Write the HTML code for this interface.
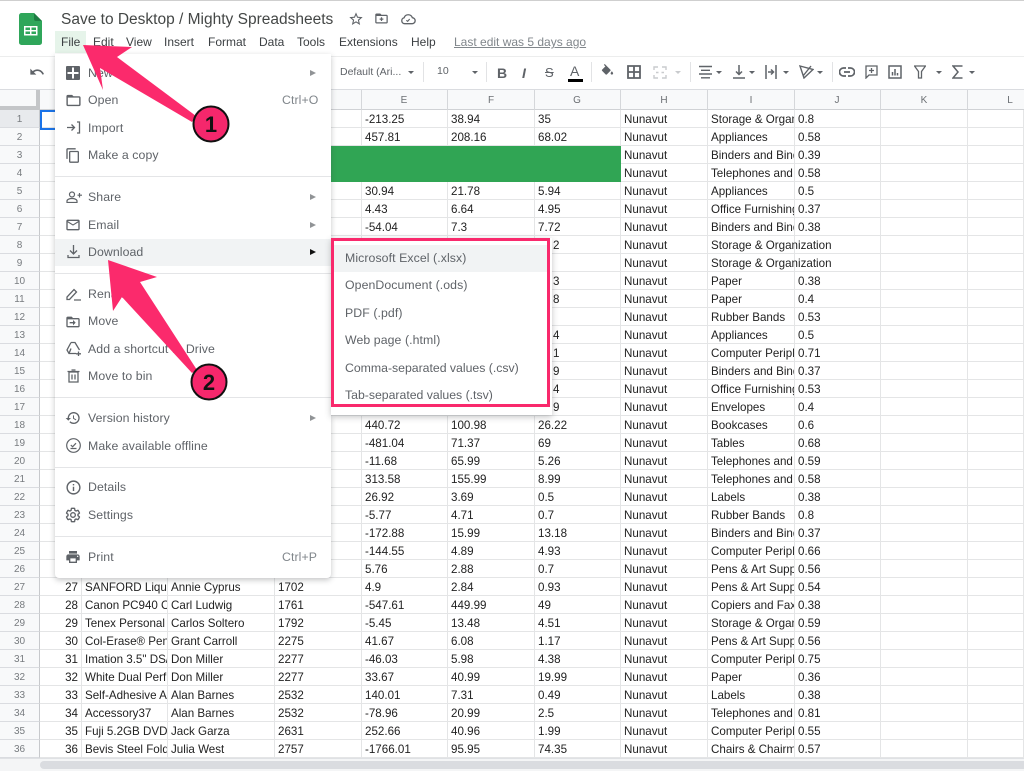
<!DOCTYPE html>
<html><head><meta charset="utf-8"><title>Save to Desktop</title>
<style>
html,body{margin:0;padding:0;background:#fff;width:1024px;height:771px;overflow:hidden}
#p{position:relative;width:1024px;height:771px;overflow:hidden;font-family:"Liberation Sans",sans-serif;filter:blur(.3px)}
.a{position:absolute;white-space:nowrap}
.m{position:absolute;white-space:nowrap;font-size:12px;color:#3c4043;top:35px;line-height:14px}
.t{position:absolute;white-space:nowrap;font-size:12.3px;letter-spacing:.08px;color:#5f6368;line-height:16px}
.s{position:absolute;left:55px;width:276px;height:1px;background:#e4e5e7}
.v{position:absolute;width:1px;height:20px;top:62px;background:#e2e3e5}
.c{position:absolute;top:94px;font-size:10px;color:#6b6f73;width:40px;text-align:center;line-height:14px}
svg.i{position:absolute;fill:#5f6368}
.tri{position:absolute;width:0;height:0;border-left:6px solid #909396;border-top:3.5px solid transparent;border-bottom:3.5px solid transparent}
.dn{position:absolute;width:0;height:0;border-top:3.5px solid #5f6368;border-left:3.5px solid transparent;border-right:3.5px solid transparent}
table{position:absolute;left:0;top:110px;border-collapse:separate;border-spacing:0;table-layout:fixed;width:1024px;font-size:11.6px;color:#222}
td,th{box-sizing:border-box;height:18px;padding:2px 3px 0;border-right:1px solid #e4e5e6;border-bottom:1px solid #e4e5e6;overflow:hidden;white-space:nowrap;font-weight:normal;text-align:left;line-height:15px}
th{background:#f8f9fa;color:#777b7f;font-size:10px;text-align:center;border-right:1px solid #c7c9cc;border-bottom:1px solid #dadce0}
.r{text-align:right}
.o{overflow:visible;position:relative}
td.d{padding-left:18px}
</style></head><body><div id="p">

<div class="a" style="left:0;top:0;width:1024px;height:1px;background:#cfcfcf"></div>

<!-- Sheets logo -->
<svg class="a" style="left:19px;top:13px" width="24" height="32" viewBox="0 0 24 32"><path d="M2.5 0H15l8 8v21.500a2.500 2.500 0 0 1-2.500 2.500H2.500A2.500 2.500 0 0 1 0 29.500V2.500A2.500 2.500 0 0 1 2.500 0z" fill="#2fa65a"/><path d="M15 0l8 8h-6a2 2 0 0 1-2-2z" fill="#1e7d44"/><path d="M5 13h13.500v9.500H5zM6.500 14.500V17H11v-2.500zM12.500 14.500V17H17v-2.500zM6.500 18.500V21H11v-2.500zM12.500 18.500V21H17v-2.500z" fill="#fff" fill-rule="evenodd"/></svg>

<div class="a" style="left:61px;top:11px;font-size:15.5px;line-height:18px;color:#444746">Save to Desktop / Mighty Spreadsheets</div>

<svg class="i" style="left:348px;top:11px" width="16" height="16" viewBox="0 0 24 24"><path d="M22 9.240l-7.190-.62L12 2 9.190 8.630 2 9.240l5.460 4.730L5.820 21 12 17.270 18.180 21l-1.630-7.030L22 9.240zM12 15.400l-3.760 2.270 1-4.280-3.320-2.880 4.380-.38L12 6.100l1.710 4.040 4.380.38-3.320 2.880 1 4.280L12 15.400z"/></svg>
<svg class="i" style="left:374px;top:11px" width="15" height="15" viewBox="0 0 24 24"><path d="M20 6h-8l-2-2H4c-1.100 0-2 .9-2 2v12c0 1.100.9 2 2 2h16c1.100 0 2-.9 2-2V8c0-1.100-.9-2-2-2zm0 12H4V8h16v10z"/><path d="M11 10h2v2h2v2h-2v2h-2v-2H9v-2h2z"/></svg>
<svg class="a" style="left:400px;top:11px" width="16" height="16" viewBox="0 0 24 24" fill="none" stroke="#5f6368" stroke-width="2"><path d="M7 19a4.500 4.500 0 0 1-.8-8.900A6.500 6.500 0 0 1 18.500 10a4.500 4.500 0 0 1-.5 9z"/><path d="M9.500 14l2 1.500 3-3.500" stroke-width="1.700"/></svg>

<!-- Menu bar -->
<div class="a" style="left:55px;top:31px;width:31px;height:22px;background:#e6f4ea"></div>
<div class="m" style="left:61px">File</div>
<div class="m" style="left:93px">Edit</div>
<div class="m" style="left:126px">View</div>
<div class="m" style="left:164px">Insert</div>
<div class="m" style="left:208px">Format</div>
<div class="m" style="left:259px">Data</div>
<div class="m" style="left:297px">Tools</div>
<div class="m" style="left:339px">Extensions</div>
<div class="m" style="left:411px">Help</div>
<div class="m" style="left:454px;color:#80868b;text-decoration:underline">Last edit was 5 days ago</div>

<!-- Toolbar -->
<div class="a" style="left:0;top:56px;width:1024px;height:1px;background:#eceded"></div>
<div class="a" style="left:0;top:89px;width:1024px;height:1px;background:#dadce0"></div>
<svg class="i" style="left:29px;top:64px" width="16" height="16" viewBox="0 0 24 24"><path d="M12.500 8c-2.650 0-5.050.99-6.900 2.600L2 7v9h9l-3.620-3.620c1.390-1.160 3.160-1.880 5.120-1.880 3.540 0 6.550 2.310 7.600 5.500l2.370-.78C21.080 11.030 17.150 8 12.500 8z"/></svg>
<div class="a" style="left:340px;top:66px;font-size:10.500px;color:#5f6368;line-height:13px">Default (Ari...</div>
<div class="dn" style="left:408px;top:71px"></div>
<div class="v" style="left:423px"></div>
<div class="a" style="left:437px;top:65px;font-size:10.500px;color:#5f6368;line-height:13px">10</div>
<div class="dn" style="left:472px;top:71px"></div>
<div class="v" style="left:486px"></div>
<div class="a" style="left:497px;top:65px;font-size:14px;font-weight:bold;color:#5f6368;line-height:16px">B</div>
<div class="a" style="left:522px;top:65px;font-size:14px;font-weight:bold;font-style:italic;color:#5f6368;line-height:16px">I</div>
<div class="a" style="left:545px;top:65px;font-size:13px;color:#5f6368;line-height:16px;text-decoration:line-through">S</div>
<div class="a" style="left:570px;top:63px;font-size:14px;color:#5f6368;line-height:16px">A</div>
<div class="a" style="left:568px;top:79px;width:15px;height:3px;background:#000"></div>
<div class="v" style="left:591px"></div>
<svg class="i" style="left:600px;top:64px" width="15" height="15" viewBox="0 0 24 24"><path d="M16.560 8.940 7.620 0 6.210 1.410l2.380 2.380-5.150 5.150c-.59.590-.59 1.540 0 2.120l5.500 5.500c.29.290.68.440 1.060.44s.77-.15 1.060-.44l5.500-5.500c.59-.58.59-1.530 0-2.120z"/><path d="M19 11.500s-2 2.170-2 3.500c0 1.100.9 2 2 2s2-.9 2-2c0-1.330-2-3.500-2-3.500z"/></svg>
<svg class="a" style="left:627px;top:65px" width="14" height="14" viewBox="0 0 14 14" fill="none" stroke="#5f6368" stroke-width="1.800"><path d="M1 1h12v12H1zM7 1v12M1 7h12"/></svg>
<svg class="a" style="left:653px;top:66px" width="14" height="13" viewBox="0 0 14 13" fill="none" stroke="#c9cbce" stroke-width="1.400"><path d="M1 4V1h4M9 1h4v3M13 9v3H9M5 12H1V9M3 6.500h2.500M8.500 6.500H11"/></svg>
<div class="dn" style="left:675px;top:71px;border-top-color:#c9cbce"></div>
<div class="v" style="left:690px"></div>
<svg class="a" style="left:699px;top:65px" width="13" height="14" viewBox="0 0 13 14" fill="none" stroke="#5f6368" stroke-width="1.400"><path d="M0 1.500h13M2 5.300h9M0 9h13M2 12.800h9"/></svg>
<div class="dn" style="left:716px;top:71px"></div>
<svg class="a" style="left:733px;top:65px" width="12" height="14" viewBox="0 0 12 14" fill="none" stroke="#5f6368" stroke-width="1.500"><path d="M0 13h12M6 0v9M3 6.500l3 3 3-3"/></svg>
<div class="dn" style="left:749px;top:71px"></div>
<svg class="a" style="left:765px;top:65px" width="12" height="14" viewBox="0 0 12 14" fill="none" stroke="#5f6368" stroke-width="1.500"><path d="M1 0v14M11 0v14M3 7h5M6 4.500l2.500 2.500L6 9.500"/></svg>
<div class="dn" style="left:783px;top:71px"></div>
<svg class="a" style="left:799px;top:65px" width="15" height="14" viewBox="0 0 15 14" fill="none" stroke="#5f6368" stroke-width="1.400"><path d="M1 1l13 3.500L5 13zM12 1 4 11"/></svg>
<div class="dn" style="left:817px;top:71px"></div>
<div class="v" style="left:832px"></div>
<svg class="a" style="left:839px;top:67px" width="16" height="10" viewBox="0 0 16 10" fill="none" stroke="#5f6368" stroke-width="1.700"><path d="M7 1H4.500a4 4 0 0 0 0 8H7M9 1h2.500a4 4 0 0 1 0 8H9M5 5h6"/></svg>
<svg class="a" style="left:865px;top:65px" width="13" height="14" viewBox="0 0 13 14" fill="none" stroke="#5f6368" stroke-width="1.300"><path d="M1 1h11v9H4l-3 3zM6.500 3v5M4 5.500h5"/></svg>
<svg class="a" style="left:888px;top:65px" width="14" height="14" viewBox="0 0 14 14" fill="none" stroke="#5f6368" stroke-width="1.500"><path d="M1 1h12v12H1zM4.500 10.500V7M7 10.500V4M9.500 10.500V8"/></svg>
<svg class="a" style="left:914px;top:65px" width="12" height="14" viewBox="0 0 12 14" fill="none" stroke="#5f6368" stroke-width="1.300"><path d="M.5 1h11L7.500 6.500V13h-3V6.500z"/></svg>
<div class="dn" style="left:936px;top:71px"></div>
<svg class="a" style="left:952px;top:65px" width="11" height="14" viewBox="0 0 11 14" fill="none" stroke="#5f6368" stroke-width="1.500"><path d="M10.500 1H1l5 6-5 6h9.500"/></svg>
<div class="dn" style="left:969px;top:71px"></div>

<!-- Column headers -->
<div class="a" style="left:0;top:90px;width:1024px;height:20px;background:#f8f9fa"></div>
<div class="a" style="left:0;top:106px;width:40px;height:4px;background:#c4c6c8"></div>
<div class="a" style="left:36px;top:90px;width:4px;height:20px;background:#c4c6c8"></div>
<div class="a" style="left:40px;top:109px;width:984px;height:1px;background:#d0d2d5"></div>
<div class="a" style="left:361px;top:90px;width:1px;height:20px;background:#d5d7da"></div>
<div class="a" style="left:447px;top:90px;width:1px;height:20px;background:#d5d7da"></div>
<div class="a" style="left:534px;top:90px;width:1px;height:20px;background:#d5d7da"></div>
<div class="a" style="left:620px;top:90px;width:1px;height:20px;background:#d5d7da"></div>
<div class="a" style="left:707px;top:90px;width:1px;height:20px;background:#d5d7da"></div>
<div class="a" style="left:794px;top:90px;width:1px;height:20px;background:#d5d7da"></div>
<div class="a" style="left:880px;top:90px;width:1px;height:20px;background:#d5d7da"></div>
<div class="a" style="left:967px;top:90px;width:1px;height:20px;background:#d5d7da"></div>
<div class="c" style="left:384px">E</div>
<div class="c" style="left:471px">F</div>
<div class="c" style="left:557px">G</div>
<div class="c" style="left:644px">H</div>
<div class="c" style="left:731px">I</div>
<div class="c" style="left:817px">J</div>
<div class="c" style="left:904px">K</div>
<div class="c" style="left:990px">L</div>

<!-- Grid -->
<table>
<colgroup><col style="width:40px"><col style="width:42px"><col style="width:86px"><col style="width:107px"><col style="width:87px"><col style="width:86px"><col style="width:87px"><col style="width:86px"><col style="width:87px"><col style="width:87px"><col style="width:86px"><col style="width:87px"><col style="width:56px"></colgroup>
<tr><th style="background:#e8eaed">1<td><td><td><td><td>-213.25<td>38.94<td>35<td>Nunavut<td>Storage &amp; Organization<td>0.8<td><td>
<tr><th>2<td><td><td><td><td>457.81<td>208.16<td>68.02<td>Nunavut<td>Appliances<td>0.58<td><td>
<tr><th>3<td><td><td><td><td><td><td><td>Nunavut<td>Binders and Binder<td>0.39<td><td>
<tr><th>4<td><td><td><td><td><td><td><td>Nunavut<td>Telephones and Comm<td>0.58<td><td>
<tr><th>5<td><td><td><td><td>30.94<td>21.78<td>5.94<td>Nunavut<td>Appliances<td>0.5<td><td>
<tr><th>6<td><td><td><td><td>4.43<td>6.64<td>4.95<td>Nunavut<td>Office Furnishings<td>0.37<td><td>
<tr><th>7<td><td><td><td><td>-54.04<td>7.3<td>7.72<td>Nunavut<td>Binders and Binder<td>0.38<td><td>
<tr><th>8<td><td><td><td><td><td><td class="d">2<td>Nunavut<td class="o">Storage &amp; Organization<td><td><td>
<tr><th>9<td><td><td><td><td><td><td><td>Nunavut<td class="o">Storage &amp; Organization<td><td><td>
<tr><th>10<td><td><td><td><td><td><td class="d">3<td>Nunavut<td>Paper<td>0.38<td><td>
<tr><th>11<td><td><td><td><td><td><td class="d">8<td>Nunavut<td>Paper<td>0.4<td><td>
<tr><th>12<td><td><td><td><td><td><td><td>Nunavut<td>Rubber Bands<td>0.53<td><td>
<tr><th>13<td><td><td><td><td><td><td class="d">4<td>Nunavut<td>Appliances<td>0.5<td><td>
<tr><th>14<td><td><td><td><td><td><td class="d">1<td>Nunavut<td>Computer Peripherals<td>0.71<td><td>
<tr><th>15<td><td><td><td><td><td><td class="d">9<td>Nunavut<td>Binders and Binder<td>0.37<td><td>
<tr><th>16<td><td><td><td><td><td><td class="d">4<td>Nunavut<td>Office Furnishings<td>0.53<td><td>
<tr><th>17<td><td><td><td><td><td><td class="d">9<td>Nunavut<td>Envelopes<td>0.4<td><td>
<tr><th>18<td><td><td><td><td>440.72<td>100.98<td>26.22<td>Nunavut<td>Bookcases<td>0.6<td><td>
<tr><th>19<td><td><td><td><td>-481.04<td>71.37<td>69<td>Nunavut<td>Tables<td>0.68<td><td>
<tr><th>20<td><td><td><td><td>-11.68<td>65.99<td>5.26<td>Nunavut<td>Telephones and Comm<td>0.59<td><td>
<tr><th>21<td><td><td><td><td>313.58<td>155.99<td>8.99<td>Nunavut<td>Telephones and Comm<td>0.58<td><td>
<tr><th>22<td><td><td><td><td>26.92<td>3.69<td>0.5<td>Nunavut<td>Labels<td>0.38<td><td>
<tr><th>23<td><td><td><td><td>-5.77<td>4.71<td>0.7<td>Nunavut<td>Rubber Bands<td>0.8<td><td>
<tr><th>24<td><td><td><td><td>-172.88<td>15.99<td>13.18<td>Nunavut<td>Binders and Binder<td>0.37<td><td>
<tr><th>25<td><td><td><td><td>-144.55<td>4.89<td>4.93<td>Nunavut<td>Computer Peripherals<td>0.66<td><td>
<tr><th>26<td><td><td><td><td>5.76<td>2.88<td>0.7<td>Nunavut<td>Pens &amp; Art Supplies<td>0.56<td><td>
<tr><th>27<td class="r">27<td>SANFORD Liquid Accent<td>Annie Cyprus<td>1702<td>4.9<td>2.84<td>0.93<td>Nunavut<td>Pens &amp; Art Supplies<td>0.54<td><td>
<tr><th>28<td class="r">28<td>Canon PC940 Copier<td>Carl Ludwig<td>1761<td>-547.61<td>449.99<td>49<td>Nunavut<td>Copiers and Fax<td>0.38<td><td>
<tr><th>29<td class="r">29<td>Tenex Personal Filing<td>Carlos Soltero<td>1792<td>-5.45<td>13.48<td>4.51<td>Nunavut<td>Storage &amp; Organization<td>0.59<td><td>
<tr><th>30<td class="r">30<td>Col-Erase® Pencils<td>Grant Carroll<td>2275<td>41.67<td>6.08<td>1.17<td>Nunavut<td>Pens &amp; Art Supplies<td>0.56<td><td>
<tr><th>31<td class="r">31<td>Imation 3.5" DS/HD<td>Don Miller<td>2277<td>-46.03<td>5.98<td>4.38<td>Nunavut<td>Computer Peripherals<td>0.75<td><td>
<tr><th>32<td class="r">32<td>White Dual Perf Computer<td>Don Miller<td>2277<td>33.67<td>40.99<td>19.99<td>Nunavut<td>Paper<td>0.36<td><td>
<tr><th>33<td class="r">33<td>Self-Adhesive Address<td>Alan Barnes<td>2532<td>140.01<td>7.31<td>0.49<td>Nunavut<td>Labels<td>0.38<td><td>
<tr><th>34<td class="r">34<td>Accessory37<td>Alan Barnes<td>2532<td>-78.96<td>20.99<td>2.5<td>Nunavut<td>Telephones and Comm<td>0.81<td><td>
<tr><th>35<td class="r">35<td>Fuji 5.2GB DVD-RAM<td>Jack Garza<td>2631<td>252.66<td>40.96<td>1.99<td>Nunavut<td>Computer Peripherals<td>0.55<td><td>
<tr><th>36<td class="r">36<td>Bevis Steel Folding<td>Julia West<td>2757<td>-1766.01<td>95.95<td>74.35<td>Nunavut<td>Chairs &amp; Chairmats<td>0.57<td><td>
</table>

<div class="a" style="left:275px;top:146px;width:346px;height:36px;background:#30a554"></div>
<div class="a" style="left:40px;top:110px;width:14px;height:16px;border:2px solid #1a73e8"></div>

<!-- Bottom scrollbar -->
<div class="a" style="left:0;top:758px;width:1024px;height:13px;background:#f4f5f6;border-top:1px solid #dfe1e4;box-sizing:border-box"></div>
<div class="a" style="left:40px;top:761px;width:984px;height:8px;background:#dadce0;border-radius:4px 0 0 4px"></div>

<!-- File menu -->
<div class="a" style="left:55px;top:54px;width:276px;height:524px;background:#fff;border-radius:0 0 4px 4px;box-shadow:0 2px 6px rgba(60,64,67,.3)"></div>
<div class="a" style="left:55px;top:239px;width:276px;height:27px;background:#f1f3f4"></div>
<div class="s" style="top:176px"></div>
<div class="s" style="top:273px"></div>
<div class="s" style="top:397px"></div>
<div class="s" style="top:467px"></div>
<div class="s" style="top:536px"></div>

<div class="t" style="left:88px;top:65px">New</div>
<div class="t" style="left:88px;top:92px">Open</div>
<div class="t" style="left:88px;top:120px">Import</div>
<div class="t" style="left:88px;top:147px">Make a copy</div>
<div class="t" style="left:88px;top:189px">Share</div>
<div class="t" style="left:88px;top:217px">Email</div>
<div class="t" style="left:88px;top:244px">Download</div>
<div class="t" style="left:88px;top:286px">Rename</div>
<div class="t" style="left:88px;top:313px">Move</div>
<div class="t" style="left:88px;top:341px">Add a shortcut to Drive</div>
<div class="t" style="left:88px;top:368px">Move to bin</div>
<div class="t" style="left:88px;top:410px">Version history</div>
<div class="t" style="left:88px;top:438px">Make available offline</div>
<div class="t" style="left:88px;top:479px">Details</div>
<div class="t" style="left:88px;top:507px">Settings</div>
<div class="t" style="left:88px;top:549px">Print</div>
<div class="t" style="left:282px;top:92px;color:#80868b">Ctrl+O</div>
<div class="t" style="left:282px;top:549px;color:#80868b">Ctrl+P</div>

<div class="tri" style="left:310px;top:70px"></div>
<div class="tri" style="left:310px;top:194px"></div>
<div class="tri" style="left:310px;top:222px"></div>
<div class="tri" style="left:310px;top:249px;border-left-color:#111"></div>
<div class="tri" style="left:310px;top:415px"></div>

<!-- Menu icons -->
<svg class="a" style="left:66px;top:66px" width="14" height="14" viewBox="0 0 14 14"><rect width="14" height="14" rx="1" fill="#5f6368"/><path d="M6 1.500h2V6h4.500v2H8v4.500H6V8H1.500V6H6z" fill="#fff"/></svg>
<svg class="i" style="left:65px;top:92px" width="17" height="17" viewBox="0 0 24 24"><path d="M20 6h-8l-2-2H4c-1.100 0-2 .9-2 2v12c0 1.100.9 2 2 2h16c1.100 0 2-.9 2-2V8c0-1.100-.9-2-2-2zm0 12H4V8h16v10z"/></svg>
<svg class="a" style="left:67px;top:121px" width="14" height="13" viewBox="0 0 14 13" fill="none" stroke="#5f6368" stroke-width="1.300"><path d="M0 6.500h7M4.500 3.500l3 3-3 3M10 1h2.500v11H10"/></svg>
<svg class="i" style="left:65px;top:147px" width="16" height="17" viewBox="0 0 24 24"><path d="M16 1H4c-1.100 0-2 .9-2 2v14h2V3h12V1zm3 4H8c-1.100 0-2 .9-2 2v14c0 1.100.9 2 2 2h11c1.100 0 2-.9 2-2V7c0-1.100-.9-2-2-2zm0 16H8V7h11v14z"/></svg>
<svg class="a" style="left:66px;top:191px" width="16" height="12" viewBox="0 0 16 12" fill="none" stroke="#5f6368" stroke-width="1.200"><circle cx="6" cy="3.500" r="2.500"/><path d="M1 11.500V10c0-1.500 2.500-2.500 5-2.500s5 1 5 2.500v1.500zM13.500 2v4.500M11.500 4.200h4.500"/></svg>
<svg class="i" style="left:65px;top:217px" width="16" height="16" viewBox="0 0 24 24"><path d="M20 4H4c-1.100 0-2 .9-2 2v12c0 1.100.9 2 2 2h16c1.100 0 2-.9 2-2V6c0-1.100-.9-2-2-2zm0 14H4V8l8 5 8-5v10zm-8-7L4 6h16l-8 5z"/></svg>
<svg class="a" style="left:67px;top:245px" width="13" height="14" viewBox="0 0 13 14" fill="none" stroke="#5f6368" stroke-width="1.300"><path d="M6.500 0v8.500M3 5.500l3.500 3.500L10 5.500M1 10v2.500h11V10"/></svg>
<svg class="a" style="left:66px;top:287px" width="15" height="14" viewBox="0 0 15 14" fill="none" stroke="#5f6368" stroke-width="1.300"><path d="M1 12.500V10L8 2.500l2.500 2.500L3.500 12.500zM8 13h7"/></svg>
<svg class="i" style="left:65px;top:314px" width="16" height="16" viewBox="0 0 24 24"><path d="M20 6h-8l-2-2H4c-1.100 0-2 .9-2 2v12c0 1.100.9 2 2 2h16c1.100 0 2-.9 2-2V8c0-1.100-.9-2-2-2zm0 12H4V8h16v10z"/><path d="M12 9l4 4-4 4v-3H7v-2h5z"/></svg>
<svg class="a" style="left:66px;top:341px" width="16" height="16" viewBox="0 0 16 16" fill="none" stroke="#5f6368" stroke-width="1.300"><path d="M5 1.500h4L13.500 9M5 1.500L1 9l2 3.500h7M5 7.500l-2 5M12.500 10.500v4.500M10 12.800h5"/></svg>
<svg class="a" style="left:67px;top:369px" width="13" height="14" viewBox="0 0 13 14" fill="none" stroke="#5f6368" stroke-width="1.300"><path d="M2 3h9v10H2zM0.500 2.500h12M4.500 1h4M5 5.500v5M8 5.500v5"/></svg>
<svg class="i" style="left:65px;top:410px" width="16" height="16" viewBox="0 0 24 24"><path d="M13 3a9 9 0 0 0-9 9H1l3.890 3.890.07.14L9 12H6c0-3.870 3.130-7 7-7s7 3.130 7 7-3.130 7-7 7c-1.930 0-3.680-.79-4.940-2.060l-1.420 1.420A8.954 8.954 0 0 0 13 21a9 9 0 0 0 0-18zm-1 5v5l4.280 2.540.72-1.210-3.500-2.080V8H12z"/></svg>
<svg class="a" style="left:66px;top:438px" width="15" height="15" viewBox="0 0 15 15" fill="none" stroke="#5f6368" stroke-width="1.200"><circle cx="7.500" cy="7.500" r="6.800"/><path d="M4.500 10.500h6M4.800 7l1.800 1.800 3.400-3.600"/></svg>
<svg class="i" style="left:65px;top:479px" width="17" height="17" viewBox="0 0 24 24"><path d="M11 7h2v2h-2zm0 4h2v6h-2zm1-9C6.480 2 2 6.480 2 12s4.480 10 10 10 10-4.480 10-10S17.520 2 12 2zm0 18c-4.410 0-8-3.590-8-8s3.590-8 8-8 8 3.590 8 8-3.590 8-8 8z"/></svg>
<svg class="a" style="left:65px;top:507px" width="16" height="16" viewBox="0 0 24 24" fill="none" stroke="#5f6368" stroke-width="2"><path d="M19.430 12.980c.04-.32.07-.64.07-.98s-.03-.66-.07-.98l2.110-1.650c.19-.15.24-.42.12-.64l-2-3.460c-.12-.22-.39-.3-.61-.22l-2.490 1c-.52-.4-1.080-.73-1.690-.98l-.38-2.650C14.460 2.180 14.250 2 14 2h-4c-.25 0-.46.18-.49.42l-.38 2.650c-.61.25-1.170.59-1.690.98l-2.490-1c-.23-.09-.49 0-.61.22l-2 3.460c-.13.22-.07.49.12.64l2.110 1.650c-.04.32-.07.65-.07.98s.03.66.07.98l-2.110 1.650c-.19.15-.24.42-.12.64l2 3.460c.12.22.39.3.61.22l2.490-1c.52.4 1.080.73 1.690.98l.38 2.650c.03.24.24.42.49.42h4c.25 0 .46-.18.49-.42l.38-2.650c.61-.25 1.170-.59 1.690-.98l2.490 1c.23.09.49 0 .61-.22l2-3.460c.12-.22.07-.49-.12-.64l-2.110-1.650z"/><circle cx="12" cy="12" r="3.500"/></svg>
<svg class="i" style="left:65px;top:549px" width="16" height="16" viewBox="0 0 24 24"><path d="M19 8H5c-1.660 0-3 1.340-3 3v6h4v4h12v-4h4v-6c0-1.660-1.340-3-3-3zm-3 11H8v-5h8v5zm3-7c-.55 0-1-.45-1-1s.45-1 1-1 1 .45 1 1-.45 1-1 1zm-1-9H6v4h12V3z"/></svg>

<!-- Download submenu -->
<div class="a" style="left:331px;top:238px;width:221px;height:177px;background:#fff;box-shadow:0 2px 6px rgba(60,64,67,.3)"></div>
<div class="a" style="left:334px;top:245px;width:213px;height:27px;background:#f1f3f4"></div>
<div class="t" style="left:345px;top:250px">Microsoft Excel (.xlsx)</div>
<div class="t" style="left:345px;top:277px">OpenDocument (.ods)</div>
<div class="t" style="left:345px;top:305px">PDF (.pdf)</div>
<div class="t" style="left:345px;top:332px">Web page (.html)</div>
<div class="t" style="left:345px;top:360px;letter-spacing:-.02px">Comma-separated values (.csv)</div>
<div class="t" style="left:345px;top:387px;letter-spacing:-.02px">Tab-separated values (.tsv)</div>
<div class="a" style="left:331px;top:238px;width:219px;height:169px;box-sizing:border-box;border:3px solid #f9296c"></div>

<!-- Annotation arrows -->
<svg class="a" style="left:0;top:0" width="1024" height="771" viewBox="0 0 1024 771">
<polygon points="83,45 132,47 117,57 196,116 192,122 100,68 103,90" fill="#fb2a6c"/>
<polygon points="108,260 157,277 140,282 197,370 192,373 122,297 113,311" fill="#fb2a6c"/>
<circle cx="211" cy="124" r="17.500" fill="#f5276c" stroke="#111" stroke-width="2"/>
<circle cx="209" cy="382" r="17.500" fill="#f5276c" stroke="#111" stroke-width="2"/>
<text x="211" y="132" text-anchor="middle" font-family="Liberation Sans, sans-serif" font-weight="bold" font-size="22" fill="#111">1</text>
<text x="209" y="390" text-anchor="middle" font-family="Liberation Sans, sans-serif" font-weight="bold" font-size="22" fill="#111">2</text>
</svg>
</div></body></html>
